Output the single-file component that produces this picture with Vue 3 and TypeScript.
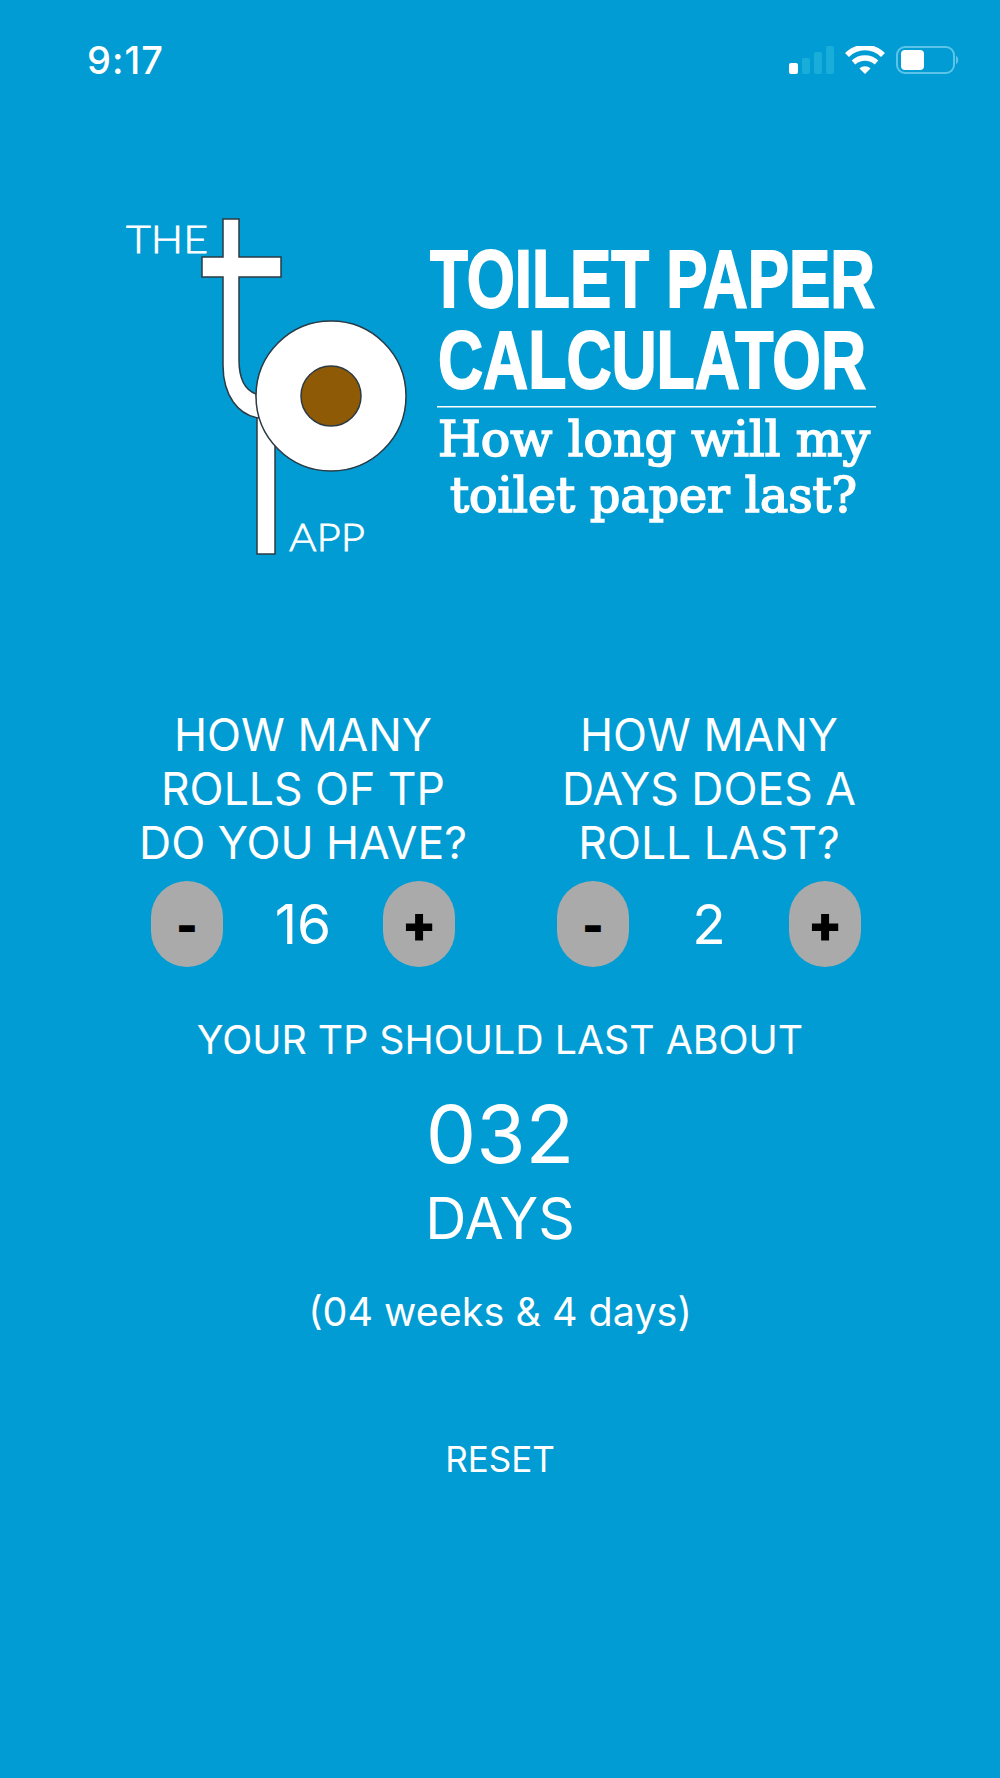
<script setup lang="ts">
import { computed, ref } from 'vue'

const rolls = ref(16)
const daysPerRoll = ref(2)

const totalDays = computed(() => rolls.value * daysPerRoll.value)
const pad = (n: number, size: number) => String(n).padStart(size, '0')

function step(target: typeof rolls, by: number) {
  target.value = Math.max(1, target.value + by)
}

function reset() {
  rolls.value = 16
  daysPerRoll.value = 2
}
</script>

<template>
  <div class="page">
    <div class="status">
      <span class="status__time">9:17</span>
      <svg class="status__icons" width="172" height="28" viewBox="0 0 172 28">
        <rect x="0" y="17" width="9" height="11" rx="2" fill="#fff" />
        <rect x="13" y="12" width="8" height="16" rx="2" fill="#18aed9" />
        <rect x="25" y="6" width="8" height="22" rx="2" fill="#18aed9" />
        <rect x="37" y="0" width="8" height="28" rx="2" fill="#18aed9" />
        <path d="M58 9 C68 -1 84 -1 94 9" fill="none" stroke="#fff" stroke-width="5.500" />
        <path d="M64.500 16.500 C71 10.500 81 10.500 87.500 16.500" fill="none" stroke="#fff" stroke-width="5.500" />
        <path d="M70.500 22.500 C73.500 19.500 78.500 19.500 81.500 22.500 L76 28 Z" fill="#fff" />
        <rect x="108" y="1" width="57" height="26" rx="8" fill="none" stroke="#5cc4e8" stroke-width="2" />
        <rect x="112" y="4" width="23" height="20" rx="4" fill="#fff" />
        <path d="M167 10 C170 11 170 17 167 18 Z" fill="#5cc4e8" />
      </svg>
    </div>

    <svg class="logo" width="800" height="370" viewBox="100 200 800 370">
      <g fill="#fff" stroke="#2b3a44" stroke-width="1.500">
        <rect x="257" y="416" width="18" height="138" />
        <path d="M223 219 H239 V257 H281 V277 H239 V360 C239 378 245 390 256 394 L260 418 C238 416 223 395 223 365 V277 H202 V257 H223 Z" />
        <circle cx="331" cy="396" r="75" />
        <circle cx="331" cy="396" r="30" fill="#8f5a05" />
      </g>
      <g class="logo__small" fill="#fff" stroke="#fff" stroke-width="0.800">
        <text x="126" y="253" textLength="82" lengthAdjust="spacingAndGlyphs">THE</text>
        <text x="289" y="551" textLength="76" lengthAdjust="spacingAndGlyphs">APP</text>
      </g>
      <g class="logo__title" fill="#fff" stroke="#fff" stroke-width="1.500">
        <text transform="translate(430 307) scale(1 1.260)" textLength="445" lengthAdjust="spacingAndGlyphs">TOILET PAPER</text>
        <text transform="translate(438 388) scale(1 1.260)" textLength="428" lengthAdjust="spacingAndGlyphs">CALCULATOR</text>
      </g>
      <rect x="437" y="406" width="439" height="1.500" fill="#fff" />
      <g class="logo__tag" fill="#fff" stroke="#fff" stroke-width="1.600">
        <text x="438" y="456" textLength="432" lengthAdjust="spacingAndGlyphs">How long will my</text>
        <text x="450" y="512" textLength="407" lengthAdjust="spacingAndGlyphs">toilet paper last?</text>
      </g>
    </svg>

    <div class="inputs">
      <div class="input">
        <div class="input__label">HOW MANY<br />ROLLS OF TP<br />DO YOU HAVE?</div>
        <div class="input__row">
          <button class="btn" type="button" @click="step(rolls, -1)"><span class="btn__minus">-</span></button>
          <span class="input__value">{{ rolls }}</span>
          <button class="btn" type="button" @click="step(rolls, 1)">+</button>
        </div>
      </div>
      <div class="input">
        <div class="input__label">HOW MANY<br />DAYS DOES A<br />ROLL LAST?</div>
        <div class="input__row">
          <button class="btn" type="button" @click="step(daysPerRoll, -1)"><span class="btn__minus">-</span></button>
          <span class="input__value">{{ daysPerRoll }}</span>
          <button class="btn" type="button" @click="step(daysPerRoll, 1)">+</button>
        </div>
      </div>
    </div>

    <div class="result">
      <div class="result__intro">YOUR TP SHOULD LAST ABOUT</div>
      <div class="result__days">{{ pad(totalDays, 3) }}</div>
      <div class="result__unit">DAYS</div>
      <div class="result__weeks">({{ pad(Math.floor(totalDays / 7), 2) }} weeks &amp; {{ totalDays % 7 }} days)</div>
      <button class="reset" type="button" @click="reset">RESET</button>
    </div>
  </div>
</template>

<style scoped>
.page {
  min-height: 1778px;
  background: #019cd3;
  color: #fff;
  font-family: Inter, "Liberation Sans", sans-serif;
  text-align: center;
}

.status {
  display: flex;
  justify-content: space-between;
  align-items: center;
  height: 100px;
  padding: 20px 39px 0 87px;
  box-sizing: border-box;
}
.status__time {
  font-size: 38px;
  font-weight: 500;
  letter-spacing: 1px;
  line-height: 40px;
}
.status__icons {
  display: block;
}

.logo {
  display: block;
  margin: 100px auto 0;
}
.logo__small {
  font-family: Lato, sans-serif;
  font-weight: 300;
  font-size: 38px;
}
.logo__title {
  font-family: "Liberation Sans", sans-serif;
  font-weight: 700;
  font-size: 65px;
}
.logo__tag {
  font-family: "DejaVu Serif", serif;
  font-stretch: condensed;
  font-weight: 400;
  font-size: 49px;
}

.inputs {
  display: flex;
  justify-content: center;
  gap: 74px;
  margin-top: 138px;
  padding-left: 12px;
}
.input {
  width: 332px;
}
.input__label {
  font-size: 44.500px;
  line-height: 54px;
}
.input__row {
  display: flex;
  align-items: center;
  justify-content: space-between;
  width: 304px;
  margin: 11px auto 0;
}
.input__value {
  font-size: 55px;
  font-weight: 400;
}

.btn {
  width: 72px;
  height: 86px;
  padding: 0;
  border: 0;
  border-radius: 36px;
  background: #aaaaaa;
  color: #000;
  font-family: Inter, sans-serif;
  font-size: 50px;
  font-weight: 900;
  line-height: 1;
}
.btn__minus {
  font-size: 46px;
}

.result {
  display: flex;
  flex-direction: column;
  align-items: center;
}
.result__intro {
  margin-top: 48px;
  font-size: 39.300px;
  font-weight: 400;
  line-height: 50px;
}
.result__days {
  margin-top: 24px;
  font-size: 80px;
  font-weight: 400;
  line-height: 90px;
}
.result__unit {
  margin-top: 10px;
  font-size: 57px;
  font-weight: 400;
  line-height: 60px;
}
.result__weeks {
  margin-top: 40px;
  font-size: 39.500px;
  font-weight: 400;
  line-height: 46px;
}
.reset {
  margin-top: 104px;
  padding: 0;
  border: 0;
  background: none;
  color: #fff;
  font-family: inherit;
  font-size: 35px;
  font-weight: 400;
  line-height: 40px;
}
</style>

<style>
body {
  margin: 0;
  background: #019cd3;
}
</style>
